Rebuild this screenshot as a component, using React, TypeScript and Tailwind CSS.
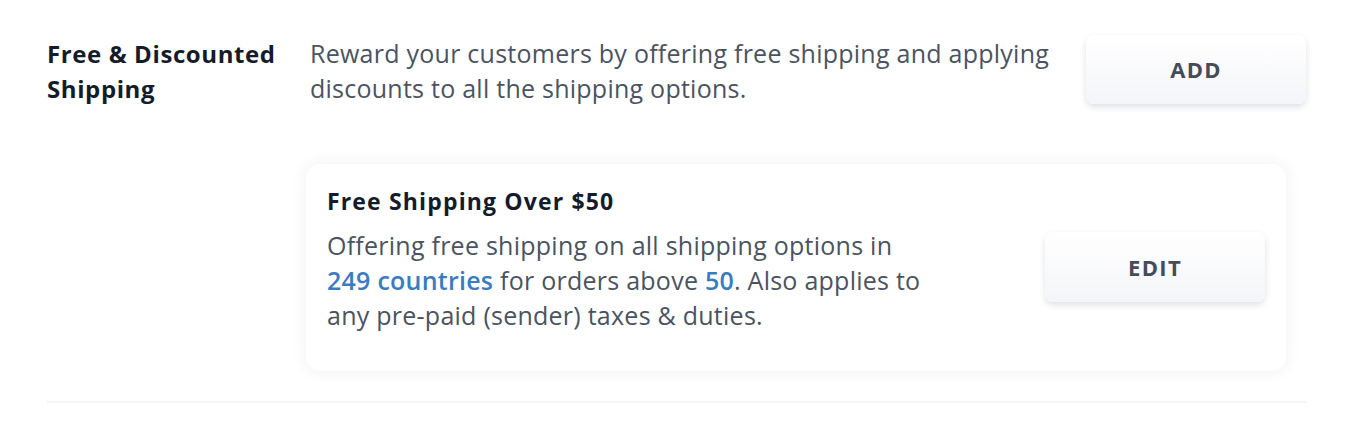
export default function App() {
  return (
    <div className="min-h-screen bg-white font-['Open_Sans',sans-serif] text-[#4b5361]">
      <div className="pl-[47px] pr-[50px] pt-[36px]">
        <div className="flex items-start">
          <div className="w-[263px] shrink-0 text-[24px] font-bold leading-[35px] tracking-[0.025em] text-[#141b2b]">
            Free &amp; Discounted Shipping
          </div>
          <div className="w-[760px] shrink-0 text-[25px] leading-[35px] tracking-[0.01em]">
            Reward your customers by offering free shipping and applying discounts to all the shipping options.
          </div>
          <button className="ml-auto mt-[-1px] h-[69px] w-[220px] rounded-[8px] bg-gradient-to-b from-white to-[#f4f5f8] text-[22px] font-bold tracking-[0.06em] text-[#454c57] shadow-[0_3px_6px_rgba(30,40,60,0.14)]">
            ADD
          </button>
        </div>

        <div className="ml-[259px] mr-[20px] mt-[58px] flex items-start rounded-[14px] bg-white px-[21px] pb-[38px] pt-[22px] shadow-[0_0_16px_rgba(30,40,60,0.07)]">
          <div className="w-[610px]">
            <div className="text-[23px] font-bold leading-[30px] tracking-[0.05em] text-[#141b2b]">
              Free Shipping Over $50
            </div>
            <div className="mt-[12px] text-[25px] leading-[35px] tracking-[0.01em]">
              Offering free shipping on all shipping options in{" "}
              <span className="font-semibold text-[#3a7cc1]">249 countries</span> for orders above{" "}
              <span className="font-semibold text-[#3a7cc1]">50</span>. Also applies to any pre-paid (sender) taxes &amp; duties.
            </div>
          </div>
          <button className="ml-auto mt-[46px] h-[70px] w-[220px] rounded-[8px] bg-gradient-to-b from-white to-[#f4f5f8] text-[22px] font-bold tracking-[0.06em] text-[#454c57] shadow-[0_3px_6px_rgba(30,40,60,0.14)]">
            EDIT
          </button>
        </div>

        <div className="mt-[30px] h-[2px] bg-[#f3f4f6]" />
      </div>
    </div>
  );
}
